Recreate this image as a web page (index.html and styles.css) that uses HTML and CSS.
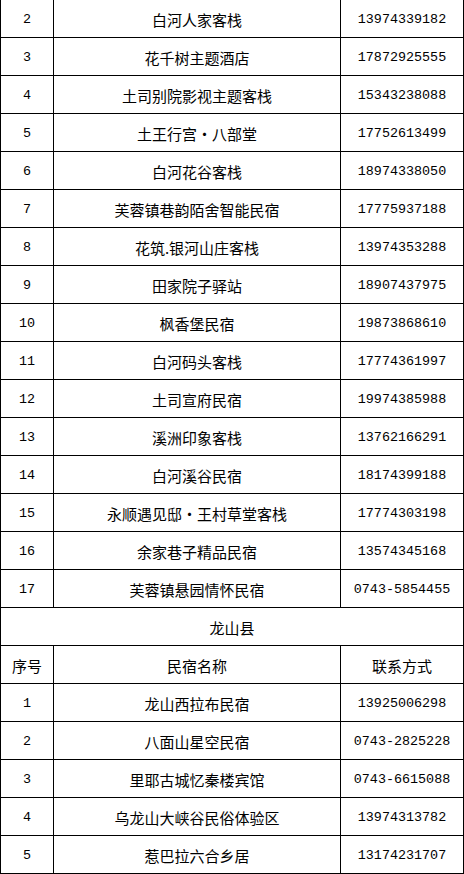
FILE: index.html
```html
<!DOCTYPE html>
<html lang="zh-CN">
<head>
<meta charset="utf-8">
<link rel="stylesheet" href="styles.css">
</head>
<body>
<table class="list">
<colgroup><col class="c-no"><col class="c-name"><col class="c-tel"></colgroup>
<tbody>
<tr><td class="num">2</td><td>白河人家客栈</td><td class="num">13974339182</td></tr>
<tr><td class="num">3</td><td>花千树主题酒店</td><td class="num">17872925555</td></tr>
<tr><td class="num">4</td><td>土司别院影视主题客栈</td><td class="num">15343238088</td></tr>
<tr><td class="num">5</td><td>土王行宫・八部堂</td><td class="num">17752613499</td></tr>
<tr><td class="num">6</td><td>白河花谷客栈</td><td class="num">18974338050</td></tr>
<tr><td class="num">7</td><td>芙蓉镇巷韵陌舍智能民宿</td><td class="num">17775937188</td></tr>
<tr><td class="num">8</td><td>花筑.银河山庄客栈</td><td class="num">13974353288</td></tr>
<tr><td class="num">9</td><td>田家院子驿站</td><td class="num">18907437975</td></tr>
<tr><td class="num">10</td><td>枫香堡民宿</td><td class="num">19873868610</td></tr>
<tr><td class="num">11</td><td>白河码头客栈</td><td class="num">17774361997</td></tr>
<tr><td class="num">12</td><td>土司宣府民宿</td><td class="num">19974385988</td></tr>
<tr><td class="num">13</td><td>溪洲印象客栈</td><td class="num">13762166291</td></tr>
<tr><td class="num">14</td><td>白河溪谷民宿</td><td class="num">18174399188</td></tr>
<tr><td class="num">15</td><td>永顺遇见邸・王村草堂客栈</td><td class="num">17774303198</td></tr>
<tr><td class="num">16</td><td>余家巷子精品民宿</td><td class="num">13574345168</td></tr>
<tr><td class="num">17</td><td>芙蓉镇悬园情怀民宿</td><td class="num">0743-5854455</td></tr>
<tr><td colspan="3">龙山县</td></tr>
<tr><td>序号</td><td>民宿名称</td><td>联系方式</td></tr>
<tr><td class="num">1</td><td>龙山西拉布民宿</td><td class="num">13925006298</td></tr>
<tr><td class="num">2</td><td>八面山星空民宿</td><td class="num">0743-2825228</td></tr>
<tr><td class="num">3</td><td>里耶古城忆秦楼宾馆</td><td class="num">0743-6615088</td></tr>
<tr><td class="num">4</td><td>乌龙山大峡谷民俗体验区</td><td class="num">13974313782</td></tr>
<tr><td class="num">5</td><td>惹巴拉六合乡居</td><td class="num">13174231707</td></tr>
</tbody>
</table>
</body>
</html>
```

FILE: styles.css
```css
html, body {
  margin: 0;
  padding: 0;
  background: #ffffff;
}
body {
  font-family: "Noto Sans CJK SC", "Noto Sans", sans-serif;
  font-size: 15px;
  color: #000000;
}
.list {
  border-collapse: collapse;
  width: 463px;
  margin-top: -1px;
  table-layout: fixed;
}
.c-no { width: 53px; }
.c-name { width: 287px; }
.c-tel { width: 123px; }
.list td {
  border: 1px solid #000000;
  height: 38px;
  padding: 3px 0 0 0;
  box-sizing: border-box;
  text-align: center;
  vertical-align: middle;
  line-height: 20px;
  white-space: nowrap;
}
.list td.num {
  font-family: "Liberation Mono", "DejaVu Sans Mono", monospace;
  font-size: 13.4px;
}
```
